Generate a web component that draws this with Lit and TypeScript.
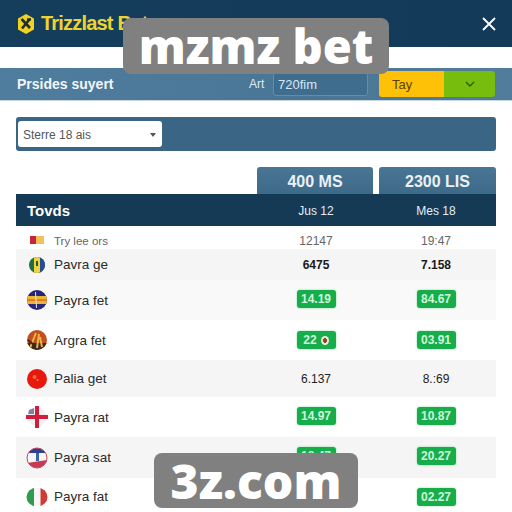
import { LitElement, html, css, svg } from "lit";
import { customElement } from "lit/decorators.js";

type Row = { name: string; flag: number; a: string; b: string; kind: "plain" | "bold" | "green"; shade: string; h: number; lift?: boolean; drop?: boolean; badge?: boolean };

const rows: Row[] = [
  { name: "Pavra ge", flag: 1, a: "6475", b: "7.158", kind: "bold", shade: "#f5f5f5", h: 31 },
  { name: "Payra fet", flag: 2, a: "14.19", b: "84.67", kind: "green", shade: "#f9f9f9", h: 40, lift: true },
  { name: "Argra fet", flag: 3, a: "22", b: "03.91", kind: "green", shade: "#ffffff", h: 40, badge: true },
  { name: "Palia get", flag: 4, a: "6.137", b: "8.:69", kind: "plain", shade: "#f5f5f5", h: 37 },
  { name: "Payra rat", flag: 5, a: "14.97", b: "10.87", kind: "green", shade: "#ffffff", h: 40, lift: true },
  { name: "Payra sat", flag: 6, a: "18.47", b: "20.27", kind: "green", shade: "#f5f5f5", h: 41, lift: true },
  { name: "Payra fat", flag: 7, a: "12.27", b: "02.27", kind: "green", shade: "#ffffff", h: 32, drop: true },
];

const flags: Record<number, unknown> = {
  1: svg`<clipPath id="f1"><circle cx="12" cy="12" r="8"/></clipPath><g clip-path="url(#f1)"><rect x="4" y="4" width="16" height="16" fill="#1d6f3c"/><rect x="13" y="4" width="8" height="16" fill="#2a4a96"/><rect x="9" y="4" width="6" height="16" fill="#f0d23c"/><rect x="11" y="8" width="2" height="5" fill="#1e5a38"/></g>`,
  2: svg`<clipPath id="f2"><circle cx="12" cy="12" r="10"/></clipPath><g clip-path="url(#f2)"><rect x="2" y="2" width="20" height="20" fill="#27267c"/><rect x="2" y="8" width="20" height="8" fill="#eeb52e"/><rect x="2" y="11.5" width="20" height="1.2" fill="#d9572a"/><path d="M10.5 4 L11.5 20" stroke="#f4ead0" stroke-width="1" fill="none"/></g>`,
  3: svg`<clipPath id="f3"><circle cx="12" cy="12" r="10"/></clipPath><g clip-path="url(#f3)"><rect x="2" y="2" width="20" height="20" fill="#c34f1c"/><rect x="2" y="15" width="20" height="7" fill="#3a2a18"/><path d="M5 20 L11 5 M12 20 L14 6 M17 19 L15 9" stroke="#e9b24a" stroke-width="2" fill="none"/><path d="M3 12 L9 17" stroke="#3a2a18" stroke-width="2"/></g>`,
  4: svg`<circle cx="12" cy="12" r="10" fill="#e8180f"/><circle cx="9.5" cy="10" r="2" fill="#f26a2a"/><circle cx="12.5" cy="13" r="1" fill="#f08a30"/>`,
  5: svg`<circle cx="12" cy="12" r="9.5" fill="#f4f0f2"/><path d="M1 10 H23 V14 H1 Z M10 1 H14 V23 H10 Z" fill="#cf1f3c"/><path d="M4 5 L9 3 V9 H3 Z" fill="#8a7ca6"/>`,
  6: svg`<clipPath id="f6"><circle cx="12" cy="12" r="10"/></clipPath><g clip-path="url(#f6)"><rect x="2" y="2" width="20" height="20" fill="#f5f5f7"/><rect x="2" y="2" width="20" height="5" fill="#2c3f92"/><path d="M2 17 L22 14 L22 22 L2 22 Z" fill="#c83a52"/><rect x="11" y="7" width="3" height="8" fill="#3c62a8"/></g><circle cx="12" cy="12" r="10" fill="none" stroke="#c04a5e" stroke-width="1"/>`,
  7: svg`<clipPath id="f7"><ellipse cx="12" cy="12" rx="10.5" ry="9.5"/></clipPath><g clip-path="url(#f7)"><rect x="1" y="1" width="8" height="22" fill="#2f9a50"/><rect x="9" y="1" width="6.5" height="22" fill="#f7f7f5"/><rect x="15.5" y="1" width="8" height="22" fill="#cf3b36"/></g>`,
};

@customElement("app-root")
export class AppRoot extends LitElement {
  static styles = css`
    :host { display: block; width: 512px; height: 512px; position: relative; overflow: hidden; background: #fff; font-family: "Liberation Sans", Arial, sans-serif; color: #222; }
    .header { height: 47px; background: linear-gradient(90deg, #153e5c, #133a58); display: flex; align-items: center; justify-content: space-between; padding: 0 15px 0 17px; }
    .brand { display: flex; align-items: center; gap: 6px; color: #eed32e; font-size: 20px; font-weight: 700; letter-spacing: -0.8px; }
    .gap { height: 21px; }
    .sub { height: 32px; background: linear-gradient(90deg, #4f7d9e, #4a7696 60%, #527c9b); border-bottom: 1px solid #c6d6e0; display: flex; align-items: center; padding: 0 17px; color: #fff; }
    .sub-title { font-size: 14px; font-weight: 700; width: 232px; color: #f2f6fa; }
    .art { font-size: 12px; color: #dbe9f4; width: 20px; }
    .input { width: 95px; height: 24px; box-sizing: border-box; margin-left: 4px; border: 1px solid #5f8eae; border-radius: 3px; background: #3f6d8e; font-size: 13px; color: #d6e8f4; display: flex; align-items: center; padding-left: 4px; }
    .split { display: flex; width: 116px; height: 26px; margin-left: 11px; border-radius: 3px; overflow: hidden; font-size: 13px; color: #5a4208; }
    .split .y { width: 65px; background: #fec107; display: flex; align-items: center; padding-left: 13px; box-sizing: border-box; }
    .split .g { flex: 1; background: #77bd0e; display: flex; align-items: center; justify-content: center; }
    .filter { margin: 16px 16px 0; height: 34px; box-sizing: border-box; background: #3b6585; border-radius: 3px; padding: 4px 2px; }
    .select { width: 144px; height: 26px; background: #fff; border-radius: 3px; box-sizing: border-box; display: flex; align-items: center; justify-content: space-between; padding: 1px 5px 0 5px; font-size: 12px; color: #555; }
    .tri { width: 0; height: 0; border-left: 3.5px solid transparent; border-right: 3.5px solid transparent; border-top: 4px solid #555; margin-right: 1px; }
    .tabs { display: flex; justify-content: flex-end; gap: 6px; margin: 16px 16px 0 0; }
    .tab { width: 116px; height: 27px; box-sizing: border-box; padding-top: 2px; background: linear-gradient(#4a7595, #3e6a89); border-radius: 3px 3px 0 0; display: flex; align-items: center; justify-content: center; font-size: 16px; font-weight: 700; color: #eaf1f6; }
    .tab + .tab { width: 117px; }
    .table { margin: 0 16px; }
    .row { display: grid; grid-template-columns: 240px 120px 120px; align-items: center; }
    .name { display: flex; align-items: center; gap: 5px; padding-left: 9px; font-size: 13.5px; color: #2b2b2b; }
    .cell { text-align: center; font-size: 12px; }
    .thead { height: 32px; background: #143a56; }
    .thead .name { padding-left: 11px; font-size: 15px; font-weight: 700; color: #fff; }
    .thead .cell { font-size: 12px; color: #e6eef4; padding-top: 1px; }
    .ico { width: 24px; height: 24px; flex: none; }
    .sublabel { height: 23px; padding-top: 7px; box-sizing: border-box; }
    .sublabel .name { font-size: 11.5px; color: #666; padding-left: 38px; position: relative; }
    .sublabel .cell { font-size: 12px; color: #666; }
    .mini { position: absolute; left: 14px; top: 50%; margin-top: -5px; width: 14px; height: 8px; background: linear-gradient(90deg, #c8243c 40%, #efc25a 40%); }
    .bold { font-weight: 700; color: #1a1a1a; }
    .pill { display: inline-flex; align-items: center; justify-content: center; gap: 4px; width: 39px; height: 18px; background: #17ad4a; color: #cdf7da; border-radius: 3px; font-size: 12px; font-weight: 700; vertical-align: middle; box-shadow: 0 0 2px #6fd890; }
    .dot { width: 8px; height: 9px; border-radius: 50%; background: radial-gradient(#8a4a24 35%, #f1e8dc 40%); }
    .lift .cell { padding-bottom: 3px; }
    .drop > * { padding-top: 5px; }
    .tail { height: 20px; align-items: start; line-height: 12px; }
    .tail .name { padding-left: 38px; color: #667; font-size: 11px; }
    .tail .cell { color: #8fc7a4; font-size: 11px; }
    .mark { position: absolute; background: #808080; color: #fff; display: flex; align-items: center; justify-content: center; font-family: "Open Sans", sans-serif; font-weight: 800; border-radius: 8px; white-space: nowrap; }
    .m1 { left: 123px; top: 18px; width: 266px; height: 56px; font-size: 47px; }
    .m2 { left: 154px; top: 453px; width: 204px; height: 55px; font-size: 48px; }
  `;

  render() {
    return html`
      <div class="header">
        <div class="brand">
          <svg width="18" height="22" viewBox="0 0 18 22">
            <path d="M9 1 L17 5.5 V16.5 L9 21 L1 16.5 V5.5 Z" fill="#f2d21c"/>
            <path d="M4.5 6 L13 15 M5 15.5 L12 7 M10 6.5 H14" stroke="#1a2f36" stroke-width="2.6" fill="none"/>
          </svg>
          <span>Trizzlast Bet</span>
        </div>
        <svg width="16" height="16" viewBox="0 0 16 16"><path d="M2 2 L14 14 M14 2 L2 14" stroke="#fff" stroke-width="1.8"/></svg>
      </div>
      <div class="gap"></div>
      <div class="sub">
        <div class="sub-title">Prsides suyert</div>
        <div class="art">Art</div>
        <div class="input">720fim</div>
        <div class="split">
          <div class="y">Tay</div>
          <div class="g"><svg width="10" height="6" viewBox="0 0 10 6"><path d="M1 1 L5 5 L9 1" stroke="#2f5a10" stroke-width="1.4" fill="none"/></svg></div>
        </div>
      </div>
      <div class="filter">
        <div class="select"><span>Sterre 18 ais</span><span class="tri"></span></div>
      </div>
      <div class="tabs">
        <div class="tab">400 MS</div>
        <div class="tab">2300 LIS</div>
      </div>
      <div class="table">
        <div class="row thead">
          <div class="name">Tovds</div>
          <div class="cell">Jus 12</div>
          <div class="cell">Mes 18</div>
        </div>
        <div class="row sublabel">
          <div class="name"><span class="mini"></span>Try lee ors</div>
          <div class="cell">12147</div>
          <div class="cell">19:47</div>
        </div>
        ${rows.map((r) => html`
          <div class="row ${r.lift ? "lift" : ""} ${r.drop ? "drop" : ""}" style="height:${r.h}px;background:${r.shade}">
            <div class="name">
              <svg class="ico" viewBox="0 0 24 24">${flags[r.flag]}</svg>
              <span>${r.name}</span>
            </div>
            ${[r.a, r.b].map((v, i) => html`<div class="cell">${r.kind === "green"
              ? html`<span class="pill">${v}${r.badge && i === 0 ? html`<span class="dot"></span>` : ""}</span>`
              : html`<span class=${r.kind === "bold" ? "bold" : ""}>${v}</span>`}</div>`)}
          </div>`)}
        <div class="row tail">
          <div class="name">Payra fat</div>
          <div class="cell">12.47</div>
          <div class="cell">10.47</div>
        </div>
      </div>
      <div class="mark m1">mzmz bet</div>
      <div class="mark m2">3z.com</div>
    `;
  }
}
